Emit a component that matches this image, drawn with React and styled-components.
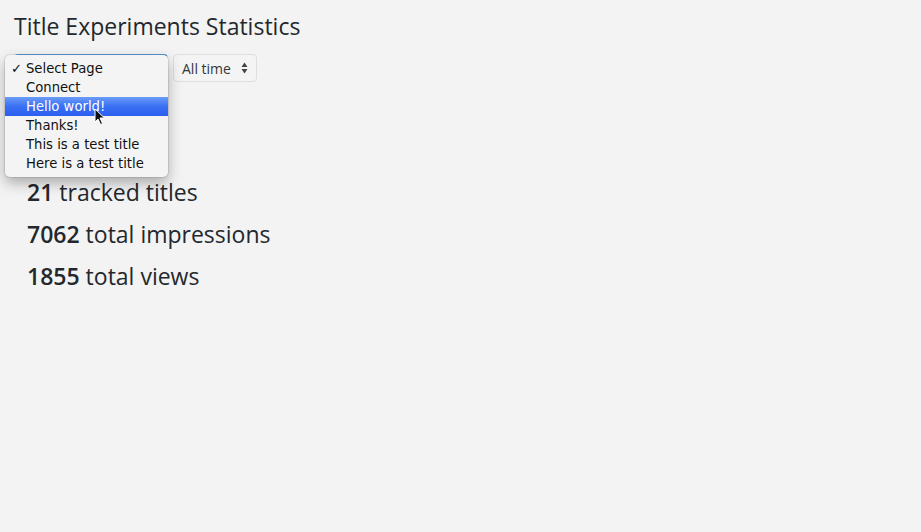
import React from 'react'
import styled, { createGlobalStyle } from 'styled-components'

const GlobalStyle = createGlobalStyle`
  html, body {
    margin: 0;
    padding: 0;
    background: #f3f3f3;
    font-family: "Open Sans", sans-serif;
    color: #23282d;
  }
`

const Page = styled.div`
  padding: 10px 14px;
  min-height: 512px;
`

const Title = styled.h1`
  margin: 0;
  font-size: 23px;
  font-weight: 400;
  line-height: 33px;
`

const Controls = styled.div`
  position: relative;
  display: flex;
  gap: 5px;
  margin-top: 11px;
  height: 28px;
`

const FakeSelect = styled.div`
  box-sizing: border-box;
  height: 28px;
  display: flex;
  align-items: center;
  gap: 10px;
  padding: 0 8px;
  border: 1px solid #dedede;
  border-radius: 4px;
  background: #f4f4f4;
  font-size: 14px;
  color: #32373c;
`

const PageSelect = styled(FakeSelect)`
  width: 154px;
  border-top: 2px solid #5b9dd9;
`

const Arrows = styled.svg`
  width: 7px;
  height: 12px;
`

const Menu = styled.ul`
  position: absolute;
  left: -9px;
  top: 1px;
  width: 163px;
  margin: 0;
  padding: 4px 0 4px;
  list-style: none;
  background: #f4f4f4;
  border-radius: 5px;
  box-shadow: 0 0 0 1px rgba(0, 0, 0, 0.08), 0 6px 14px rgba(0, 0, 0, 0.3);
  font-family: "DejaVu Sans", sans-serif;
  font-size: 13.2px;
  z-index: 2;
`

const Option = styled.li`
  position: relative;
  height: 19px;
  line-height: 19px;
  padding-left: 21px;
  white-space: nowrap;
  color: ${({ active }) => (active ? '#fff' : '#111')};
  background: ${({ active }) =>
    active ? 'linear-gradient(#6a9cf7, #3a6ff3 50%, #2b5ef0)' : 'none'};
`

const Check = styled.span`
  position: absolute;
  left: 6px;
  top: 0;
`

const Cursor = styled.svg`
  position: absolute;
  left: 89px;
  top: 11px;
  width: 12px;
  height: 18px;
  z-index: 3;
`

const Stats = styled.div`
  margin-top: 95px;
  padding-left: 13px;
  display: flex;
  flex-direction: column;
  gap: 12px;
`

const Stat = styled.p`
  margin: 0;
  font-size: 23px;
  line-height: 30px;
  & b {
    font-weight: 600;
  }
`

const options = [
  'Select Page',
  'Connect',
  'Hello world!',
  'Thanks!',
  'This is a test title',
  'Here is a test title',
]

const stats = [
  ['21', 'tracked titles'],
  ['7062', 'total impressions'],
  ['1855', 'total views'],
]

const App = () => (
  <Page>
    <GlobalStyle />
    <Title>Title Experiments Statistics</Title>
    <Controls>
      <PageSelect />
      <FakeSelect>
        All time
        <Arrows viewBox="0 0 7 12">
          <path d="M3.5 0.5 L6.5 5 H0.5 Z M3.5 11.5 L6.5 7 H0.5 Z" fill="#444" />
        </Arrows>
      </FakeSelect>
      <Menu>
        {options.map((o, i) => (
          <Option key={o} active={i === 2}>
            {i === 0 && <Check>✓</Check>}
            {o}
            {i === 2 && (
              <Cursor viewBox="0 0 12 18">
                <path
                  d="M1 1 L1 14 L4 11 L6.5 16.5 L8.5 15.5 L6 10 L10.5 10 Z"
                  fill="#111"
                  stroke="#fff"
                  strokeWidth="1"
                />
              </Cursor>
            )}
          </Option>
        ))}
      </Menu>
    </Controls>
    <Stats>
      {stats.map(([n, label]) => (
        <Stat key={label}>
          <b>{n}</b> {label}
        </Stat>
      ))}
    </Stats>
  </Page>
)

export default App
